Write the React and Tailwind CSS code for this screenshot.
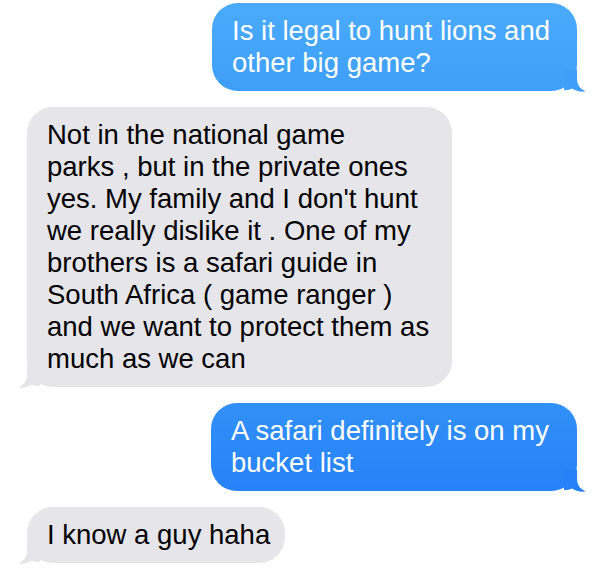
const messages = [
  {
    id: 1,
    from: "me",
    width: "w-[365px]",
    color: "bg-gradient-to-b from-[#4aaafa] to-[#3f9ff8]",
    tail: "#3f9ff8",
    lines: ["Is it legal to hunt lions and", "other big game?"],
  },
  {
    id: 2,
    from: "them",
    width: "w-[425px]",
    color: "bg-[#e5e5ea]",
    tail: "#e5e5ea",
    lines: [
      "Not in the national game",
      "parks , but in the private ones",
      "yes. My family and I don't hunt",
      "we really dislike it . One of my",
      "brothers is a safari guide in",
      "South Africa ( game ranger )",
      "and we want to protect them as",
      "much as we can",
    ],
  },
  {
    id: 3,
    from: "me",
    width: "w-[366px]",
    color: "bg-gradient-to-b from-[#3190f8] to-[#2782f7]",
    tail: "#2782f7",
    lines: ["A safari definitely is on my", "bucket list"],
  },
  {
    id: 4,
    from: "them",
    width: "w-[258px]",
    color: "bg-[#e5e5ea]",
    tail: "#e5e5ea",
    lines: ["I know a guy haha"],
  },
];

const Tail = ({ fill, mine }) => (
  <svg
    width="22"
    height="22"
    viewBox="0 0 22 22"
    className={
      mine
        ? "absolute -right-[9px] -bottom-[1px]"
        : "absolute -left-[9px] -bottom-[1px] -scale-x-100"
    }
  >
    <path
      d="M0,0 H13 V8 C13,15 16,19 22,21.5 C16,22 11,21 8,18.5 C6,19.5 3,20 0,20 Z"
      fill={fill}
    />
  </svg>
);

const Bubble = ({ msg }) => {
  const mine = msg.from === "me";
  return (
    <div className={mine ? "flex justify-end pr-[23px]" : "flex justify-start pl-[27px]"}>
      <div
        className={`relative ${msg.width} ${msg.color} rounded-[26px] pl-[20px] py-[12px] ${
          mine ? "text-white" : "text-black"
        }`}
      >
        {msg.lines.map((line, i) => (
          <div key={i} className="whitespace-nowrap relative z-10">
            {line}
          </div>
        ))}
        <Tail fill={msg.tail} mine={mine} />
      </div>
    </div>
  );
};

export default function App() {
  return (
    <div
      className="w-[600px] h-[569px] bg-white overflow-hidden pt-[3px] flex flex-col gap-[16px] text-[27.5px] leading-[32px]"
      style={{ fontFamily: '"Liberation Sans", Arial, sans-serif' }}
    >
      {messages.map((m) => (
        <Bubble key={m.id} msg={m} />
      ))}
    </div>
  );
}
